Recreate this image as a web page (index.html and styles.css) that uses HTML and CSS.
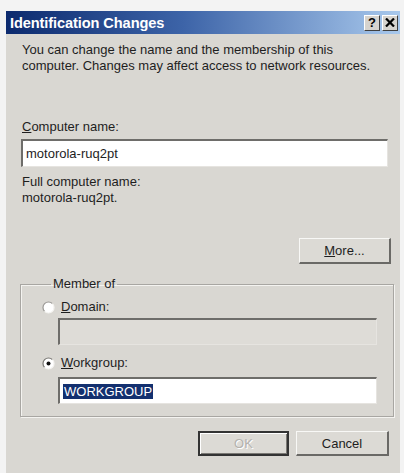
FILE: index.html
```html
<!DOCTYPE html>
<html>
<head>
<meta charset="utf-8">
<link rel="stylesheet" href="styles.css">
</head>
<body>
<div class="dialog">
  <div class="titlebar">
    <span class="title">Identification Changes</span>
    <span class="cap-btn help">?</span>
    <span class="cap-btn close">
      <svg width="10" height="9" viewBox="0 0 10 9"><path d="M1 0.5 L9 8.5 M9 0.5 L1 8.5" stroke="#000" stroke-width="2.2"/></svg>
    </span>
  </div>
  <div class="content">
    <p class="desc">You can change the name and the membership of this computer. Changes may affect access to network resources.</p>
    <div class="label label-first"><u>C</u>omputer name:</div>
    <div class="field field-main">motorola-ruq2pt</div>
    <div class="label label-full">Full computer name:</div>
    <div class="label">motorola-ruq2pt.</div>
    <div class="row-more"><span class="btn btn-more"><u>M</u>ore...</span></div>
    <fieldset class="group">
      <legend class="legend">Member of</legend>
      <div class="radio-row row-domain">
        <svg class="radio" width="13" height="13" viewBox="0 0 13 13"><circle cx="6.5" cy="6.5" r="5.5" fill="#fff"/><path d="M2.6 10.4 A5.5 5.5 0 0 1 10.4 2.6" fill="none" stroke="#9a9894" stroke-width="1.2"/><path d="M10.4 2.6 A5.5 5.5 0 0 1 2.6 10.4" fill="none" stroke="#f4f3f0" stroke-width="1.2"/></svg>
        <span><u>D</u>omain:</span>
      </div>
      <div class="field field-disabled"></div>
      <div class="radio-row row-work">
        <svg class="radio" width="13" height="13" viewBox="0 0 13 13"><circle cx="6.5" cy="6.5" r="5.5" fill="#fff"/><path d="M2.6 10.4 A5.5 5.5 0 0 1 10.4 2.6" fill="none" stroke="#7a7874" stroke-width="1.2"/><path d="M10.4 2.6 A5.5 5.5 0 0 1 2.6 10.4" fill="none" stroke="#f4f3f0" stroke-width="1.2"/><circle cx="6.5" cy="6.5" r="2" fill="#111"/></svg>
        <span><u>W</u>orkgroup:</span>
      </div>
      <div class="field field-work"><span class="selected">WORKGROUP</span></div>
    </fieldset>
    <div class="row-buttons">
      <span class="btn btn-ok">OK</span>
      <span class="btn btn-cancel">Cancel</span>
    </div>
  </div>
</div>
</body>
</html>
```
FILE: styles.css
```css
html, body {
  margin: 0;
  padding: 0;
}
body {
  background: #f3f3f3;
  width: 404px;
  height: 473px;
  overflow: hidden;
  font-family: "Liberation Sans", Arial, sans-serif;
  font-size: 13px;
  color: #1e1e1e;
}
.dialog {
  width: 394px;
  height: 462px;
  margin: 11px 0 0 6px;
  background: #d9d7d2;
}
.titlebar {
  height: 23px;
  display: flex;
  align-items: center;
  padding: 0 2px 0 4px;
  background: linear-gradient(to right, #0c2a6e 0%, #3d64a8 45%, #a8c8ec 100%);
}
.title {
  flex: 1;
  color: #fff;
  font-weight: bold;
  font-size: 14.6px;
  letter-spacing: -0.1px;
}
.cap-btn {
  width: 16px;
  height: 16px;
  margin-left: 2px;
  background: #d6d3ce;
  border-top: 1px solid #fff;
  border-left: 1px solid #fff;
  border-right: 1px solid #404040;
  border-bottom: 1px solid #404040;
  box-sizing: border-box;
  display: flex;
  align-items: center;
  justify-content: center;
  font-weight: bold;
  font-size: 13px;
  line-height: 1;
  color: #000;
}
.content {
  padding: 0 12px 0 15px;
}
.desc {
  margin: 8px 0 0 1px;
  line-height: 16px;
  width: 370px;
}
.label {
  line-height: 16px;
  padding-left: 1px;
}
.label-first {
  margin-top: 45px;
}
.label-full {
  margin-top: 7px;
}
.field {
  box-sizing: border-box;
  height: 28px;
  background: #fff;
  border-top: 2px solid #6e6d6a;
  border-left: 2px solid #6e6d6a;
  border-right: 1px solid #e6e4e0;
  border-bottom: 1px solid #e6e4e0;
  display: flex;
  align-items: center;
  padding-left: 3px;
}
.field-main {
  margin-top: 4px;
}
.row-more {
  margin-top: 32px;
  display: flex;
  justify-content: flex-end;
  margin-right: -3px;
}
.btn {
  box-sizing: border-box;
  height: 26px;
  width: 92px;
  display: flex;
  align-items: center;
  justify-content: center;
  background: #dcdad5;
  border-top: 1px solid #f8f8f6;
  border-left: 1px solid #f8f8f6;
  border-right: 2px solid #6a6966;
  border-bottom: 2px solid #6a6966;
}
.group {
  margin: 12px -6px 0 -1px;
  padding: 0 16px 12px 20px;
  border: 1px solid #a8a6a2;
  box-shadow: inset 1px 1px 0 #f4f3f0, 1px 1px 0 #f4f3f0;
  min-width: 0;
}
.legend {
  padding: 0 2px;
  margin-left: 10px;
  line-height: 16px;
}
.radio-row {
  display: flex;
  align-items: center;
  gap: 6px;
  line-height: 16px;
  margin-left: 1px;
}
.row-domain {
  margin-top: 7px;
}
.row-work {
  margin-top: 10px;
}
.field-disabled,
.field-work {
  height: 27px;
  margin-left: 17px;
}
.field-disabled {
  margin-top: 3px;
  background: #dedcd7;
}
.field-work {
  margin-top: 6px;
}
.selected {
  background: #13306f;
  color: #fff;
  padding: 0 1px;
  line-height: 15px;
}
.row-buttons {
  margin-top: 14px;
  display: flex;
  justify-content: flex-end;
  gap: 7px;
  margin-right: -1px;
}
.btn-ok {
  width: 91px;
  height: 25px;
  border: 2px solid #333;
  box-shadow: inset 1px 1px 0 #fff, inset -1px -1px 0 #7a7874;
  color: #b4b2ae;
  text-shadow: 1px 1px 0 #fff;
}
.btn-cancel {
  width: 93px;
  height: 25px;
}
```
